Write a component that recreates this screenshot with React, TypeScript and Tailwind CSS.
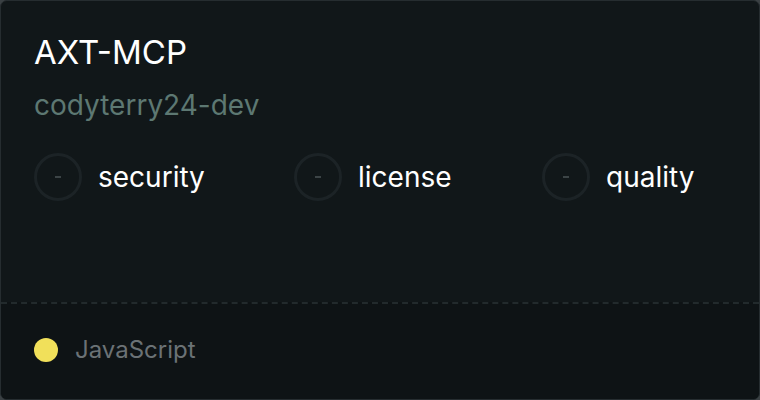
import React from 'react';

const checks = [
  { label: 'security', w: 'w-[260px]' },
  { label: 'license', w: 'w-[248px]' },
  { label: 'quality', w: '' },
];

export default function App() {
  return (
    <div className="h-[400px] w-[760px] bg-[#3a4043] font-['Inter',sans-serif]">
      <div className="flex h-full w-full flex-col overflow-hidden rounded-[7px] border border-[#262d30] bg-[#111719]">
        {/* Header */}
        <div className="flex flex-1 flex-col px-[33px] pt-[31px]">
          <h1 className="text-[33px] leading-[40px] text-white">AXT-MCP</h1>
          <p className="mt-[15px] text-[28px] leading-[36px] text-[#5d7872]">codyterry24-dev</p>
          <div className="mt-[30px] flex items-center">
            {checks.map((c) => (
              <div key={c.label} className={`flex items-center gap-[16px] ${c.w}`}>
                <div className="flex h-[48px] w-[48px] items-center justify-center rounded-full border-[3px] border-[#1c2326]">
                  <span className="h-[2px] w-[6px] bg-[#3c4446]" />
                </div>
                <span className="text-[28px] leading-[36px] text-white">{c.label}</span>
              </div>
            ))}
          </div>
        </div>
        {/* Footer */}
        <div className="flex h-[97px] items-center gap-[17px] border-t-2 border-dashed border-[#222a2c] bg-[#0e1315] px-[33px] pb-[3px]">
          <span className="h-[24px] w-[24px] rounded-full bg-[#f1e05a]" />
          <span className="text-[24px] leading-[30px] text-[#6b7275]">JavaScript</span>
        </div>
      </div>
    </div>
  );
}
